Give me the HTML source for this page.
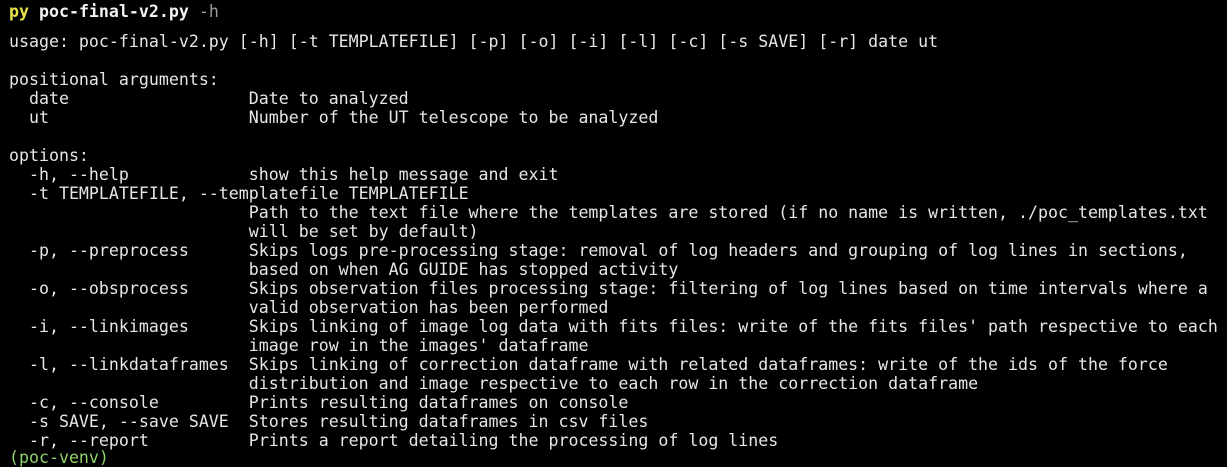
<!DOCTYPE html>
<html><head><style>
html,body{margin:0;padding:0;background:#000;width:1227px;height:456px;overflow:hidden}
pre{margin:0;position:absolute;left:9px;font-family:"DejaVu Sans Mono","Liberation Mono",monospace;font-size:16.6px;line-height:19px;color:#e6e6e6;white-space:pre}
.y{color:#e8e34a;font-weight:bold}.b{font-weight:bold;color:#f2f2f2}.g{color:#9a9a9a}.gr{color:#8fd16a}
</style></head><body>
<pre style="top:2px"><span class="y">py</span> <span class="b">poc-final-v2.py</span> <span class="g">-h</span></pre>
<pre style="top:32px">usage: poc-final-v2.py [-h] [-t TEMPLATEFILE] [-p] [-o] [-i] [-l] [-c] [-s SAVE] [-r] date ut

positional arguments:
  date                  Date to analyzed
  ut                    Number of the UT telescope to be analyzed

options:
  -h, --help            show this help message and exit
  -t TEMPLATEFILE, --templatefile TEMPLATEFILE
                        Path to the text file where the templates are stored (if no name is written, ./poc_templates.txt
                        will be set by default)
  -p, --preprocess      Skips logs pre-processing stage: removal of log headers and grouping of log lines in sections,
                        based on when AG GUIDE has stopped activity
  -o, --obsprocess      Skips observation files processing stage: filtering of log lines based on time intervals where a
                        valid observation has been performed
  -i, --linkimages      Skips linking of image log data with fits files: write of the fits files' path respective to each
                        image row in the images' dataframe
  -l, --linkdataframes  Skips linking of correction dataframe with related dataframes: write of the ids of the force
                        distribution and image respective to each row in the correction dataframe
  -c, --console         Prints resulting dataframes on console
  -s SAVE, --save SAVE  Stores resulting dataframes in csv files
  -r, --report          Prints a report detailing the processing of log lines</pre>
<pre style="top:448px"><span class="gr">(poc-venv)</span></pre>
</body></html>
